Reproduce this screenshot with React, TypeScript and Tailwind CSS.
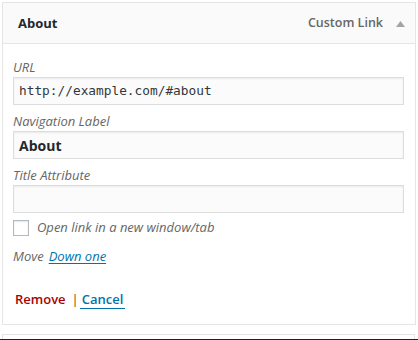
export default function App() {
  const label = "block h-[18px] text-[13px] leading-[18px] italic text-[#666]";
  const input =
    "mt-[1px] h-[28px] w-full border border-[#ddd] bg-[#fbfbfb] px-[5px] text-[#32373c] shadow-[inset_0_1px_2px_rgba(0,0,0,0.07)]";

  return (
    <div
      className="h-[340px] w-[418px] overflow-hidden bg-white pt-[2px] px-[2px]"
      style={{ fontFamily: '"Open Sans", sans-serif' }}
    >
      <div className="w-[414px] border border-[#e5e5e5]">
        {/* header */}
        <div className="flex h-[41px] items-center justify-between border-b border-[#e5e5e5] bg-[#fafafa] pl-[15px] pr-[10px] pt-[1px]">
          <span className="text-[13px] font-bold text-[#23282d]">About</span>
          <div className="flex items-center gap-[13px]">
            <span className="text-[12.5px] font-semibold text-[#666]">
              Custom Link
            </span>
            <svg width="9" height="6" viewBox="0 0 9 6">
              <path d="M4.5 0 L9 6 L0 6 Z" fill="#a0a5aa" />
            </svg>
          </div>
        </div>

        {/* settings */}
        <div className="flex h-[280px] flex-col pl-[10px] pr-[11px] pt-[14px]">
          <div className="mb-[7px]">
            <span className={label}>URL</span>
            <div className={`${input} flex items-center`}>
              <span
                className="text-[12.8px]"
                style={{ fontFamily: '"DejaVu Sans Mono", monospace' }}
              >
                http://example.com/#about
              </span>
            </div>
          </div>

          <div className="mb-[7px]">
            <span className={label}>Navigation Label</span>
            <div className={`${input} flex items-center`}>
              <span className="text-[14px] font-bold text-[#23282d]">About</span>
            </div>
          </div>

          <div className="mb-[7px]">
            <span className={label}>Title Attribute</span>
            <div className={input} />
          </div>

          <div className="flex h-[16px] items-center gap-[8px]">
            <div className="h-[16px] w-[16px] border border-[#b4b9be] bg-white shadow-[inset_0_1px_2px_rgba(0,0,0,0.1)]" />
            <span className="text-[13px] italic text-[#666]">
              Open link in a new window/tab
            </span>
          </div>

          <div className="mt-[11px] flex h-[18px] items-center gap-[5px] text-[13px] leading-[18px] italic">
            <span className="text-[#666]">Move</span>
            <span className="text-[#0073aa] underline underline-offset-2">
              Down one
            </span>
          </div>

          <div className="mt-[25px] flex h-[18px] items-center pl-[2px] text-[13px] font-semibold leading-[18px]">
            <span className="text-[#a00]">Remove</span>
            <span className="ml-[6px] mr-[1px] font-semibold text-[#b5651d]">|</span>
            <span className="border-b border-[#0073aa] px-[2px] text-[#0073aa]">
              Cancel
            </span>
          </div>
        </div>
      </div>

      <div className="mt-[9px] h-[5px] w-[413px] border-x border-t border-[#e5e5e5]" />
      <div className="-mx-[2px] h-[1px] bg-[#1d2327]" />
    </div>
  );
}
